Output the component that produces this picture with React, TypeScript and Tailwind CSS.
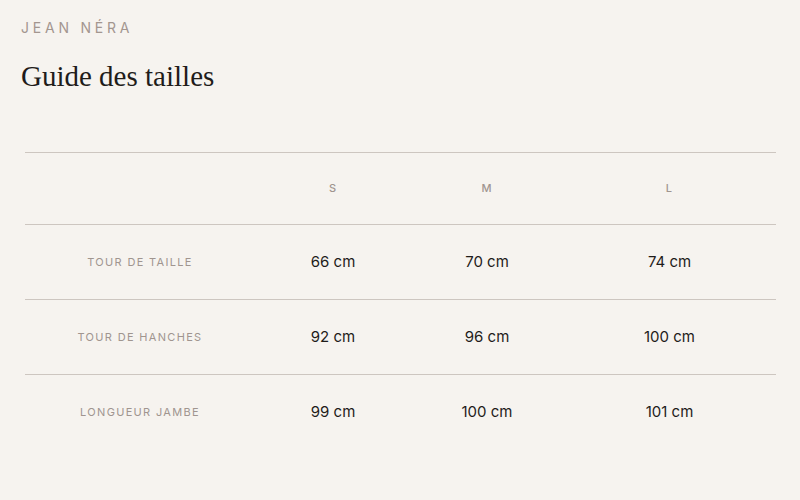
const sizes = ["S", "M", "L"];

const rows = [
  { label: "Tour de taille", values: ["66 cm", "70 cm", "74 cm"] },
  { label: "Tour de hanches", values: ["92 cm", "96 cm", "100 cm"] },
  { label: "Longueur jambe", values: ["99 cm", "100 cm", "101 cm"] },
];

export default function App() {
  return (
    <div
      className="w-[800px] h-[500px] bg-[#f6f3ef] px-[21px] pt-[19px]"
      style={{ fontFamily: "Inter, 'Liberation Sans', sans-serif" }}
    >
      <p className="text-[14px] tracking-[0.27em] text-[#a3968f] leading-[18px]">
        JEAN NÉRA
      </p>
      <h1
        className="mt-[22px] text-[29px] leading-[34px] text-[#1f1c1a]"
        style={{ fontFamily: "'Liberation Serif', serif" }}
      >
        Guide des tailles
      </h1>

      <div className="mt-[59px] ml-[4px] w-[751px] border-t border-[#cdc6c0]">
        <div className="grid grid-cols-[230px_156px_152px_213px] h-[72px] items-center border-b border-[#cdc6c0]">
          <div />
          {sizes.map((s) => (
            <div
              key={s}
              className="text-center text-[11px] font-medium tracking-[0.1em] text-[#a0958f]"
            >
              {s}
            </div>
          ))}
        </div>
        {rows.map((r, i) => (
          <div
            key={r.label}
            className={
              "grid grid-cols-[230px_156px_152px_213px] h-[75px] items-center" +
              (i < rows.length - 1 ? " border-b border-[#cdc6c0]" : "")
            }
          >
            <div className="text-center text-[11px] uppercase tracking-[0.12em] text-[#a0958f]">
              {r.label}
            </div>
            {r.values.map((v, j) => (
              <div
                key={j}
                className="text-center text-[15px] leading-[20px] -mt-[1px] text-[#1f1c1a]"
              >
                {v}
              </div>
            ))}
          </div>
        ))}
      </div>
    </div>
  );
}
